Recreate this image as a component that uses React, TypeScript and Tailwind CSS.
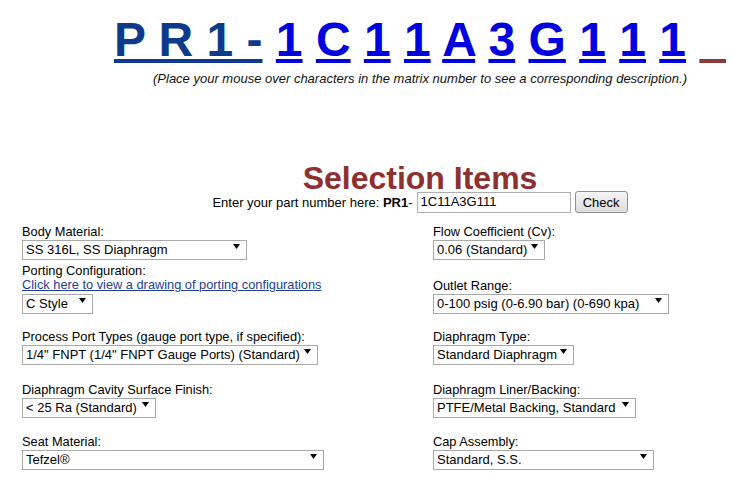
import { ChangeEvent, useState } from "react";

type Field = { label: string; value: string; w: string; after: string };

const matrix = ["1", "C", "1", "1", "A", "3", "G", "1", "1", "1"];

const Arrow = () => (
  <svg className="absolute right-[7px] top-[7px] pointer-events-none" width="7" height="5" viewBox="0 0 7 5">
    <polygon points="0,0 7,0 3.5,5" fill="#000" />
  </svg>
);

const Pick = ({ value, w }: { value: string; w: string }) => (
  <div className={"relative h-[20px] " + w}>
    <select
      defaultValue={value}
      className="appearance-none w-full h-full border border-[#a9a9a9] bg-white pl-[3px] pr-[16px] text-[13px] leading-[15px] text-black outline-none rounded-none"
    >
      <option>{value}</option>
    </select>
    <Arrow />
  </div>
);

// labels sit a little low on their line, close to the select below
const Label = ({ children }: { children: string }) => (
  <div className="h-[15px] text-[12.8px] leading-[20px] whitespace-nowrap">{children}</div>
);

const left: Field[] = [
  { label: "Process Port Types (gauge port type, if specified):", value: '1/4" FNPT (1/4" FNPT Gauge Ports) (Standard)', w: "w-[296px]", after: "mb-[18px]" },
  { label: "Diaphragm Cavity Surface Finish:", value: "< 25 Ra (Standard)", w: "w-[134px]", after: "mb-[17px]" },
  { label: "Seat Material:", value: "Tefzel®", w: "w-[302px]", after: "" },
];

const right: Field[] = [
  { label: "Flow Coefficient (Cv):", value: "0.06 (Standard)", w: "w-[112px]", after: "mb-[19px]" },
  { label: "Outlet Range:", value: "0-100 psig (0-6.90 bar) (0-690 kpa)", w: "w-[236px]", after: "mb-[16px]" },
  { label: "Diaphragm Type:", value: "Standard Diaphragm", w: "w-[141px]", after: "mb-[18px]" },
  { label: "Diaphragm Liner/Backing:", value: "PTFE/Metal Backing, Standard", w: "w-[203px]", after: "mb-[17px]" },
  { label: "Cap Assembly:", value: "Standard, S.S.", w: "w-[221px]", after: "" },
];

const Block = ({ f }: { f: Field }) => (
  <div className={f.after}>
    <Label>{f.label}</Label>
    <Pick value={f.value} w={f.w} />
  </div>
);

export default function App() {
  const [part, setPart] = useState("1C11A3G111");

  return (
    <div className="w-[733px] h-[480px] overflow-hidden bg-white text-black font-['Liberation_Sans',Arial,sans-serif]">
      {/* matrix number */}
      <div className="pl-[107px] text-center">
        <div className="pt-[12px] text-[48px] leading-[56px] font-bold whitespace-nowrap">
          <a href="#" className="text-[#0e3a8c] underline">P R 1 -</a>{" "}
          {matrix.map((c, i) => (
            <span key={i}>
              <a href="#" className="text-[#0000e0] underline">{c}</a>{" "}
            </span>
          ))}
          <a href="#" className="underline decoration-[#8b3a3a]">{"\u00a0\u00a0"}</a>
        </div>
        <p className="mt-[3px] italic text-[13px] leading-[15px] text-[#111]">
          (Place your mouse over characters in the matrix number to see a corresponding description.)
        </p>

        <h1 className="mt-[78px] text-[32px] leading-[28px] font-bold text-[#8e3030]">Selection Items</h1>
        <div className="mt-[-1px] flex justify-center items-start">
          <span className="mt-[4px] text-[13px] leading-[15px] whitespace-nowrap">
            Enter your part number here: <b>PR1</b>-
          </span>
          <input
            value={part}
            onChange={(e: ChangeEvent<HTMLInputElement>) => setPart(e.target.value)}
            className="ml-[4px] mt-[1px] w-[154px] h-[21px] border border-[#abadb3] pl-[3px] pb-[2px] text-[13px] leading-[15px] outline-none"
          />
          <button className="ml-[4px] w-[53px] h-[22px] rounded-[3px] border border-[#8e8f8f] bg-gradient-to-b from-[#f6f6f6] to-[#dcdcdc] text-[13px] leading-[15px]">
            Check
          </button>
        </div>
      </div>

      {/* selection fields */}
      <div className="mt-[9px] flex">
        <div className="w-[433px] pl-[22px]">
          <Label>Body Material:</Label>
          <div className="mb-[4px]">
            <Pick value="SS 316L, SS Diaphragm" w="w-[225px]" />
          </div>
          <Label>Porting Configuration:</Label>
          <a href="#" className="block h-[15px] text-[12.8px] leading-[18px] text-[#1c3f94] underline whitespace-nowrap">
            Click here to view a drawing of porting configurations
          </a>
          <div className="mb-[16px]">
            <Pick value="C Style" w="w-[71px]" />
          </div>
          {left.map((f) => (
            <Block key={f.label} f={f} />
          ))}
        </div>
        <div>
          {right.map((f) => (
            <Block key={f.label} f={f} />
          ))}
        </div>
      </div>
    </div>
  );
}
